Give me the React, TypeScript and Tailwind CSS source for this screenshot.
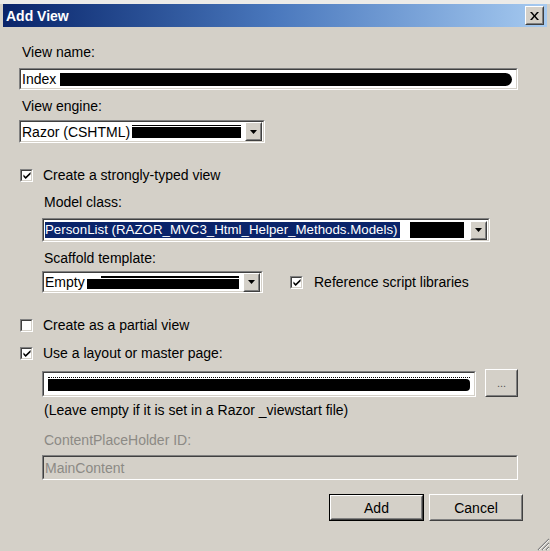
import type { ReactNode } from "react"

// Classic Windows "Add View" dialog.

function Sunken({ className = "", children }: { className?: string; children?: ReactNode }) {
  return (
    <div className={`border border-t-[#808080] border-l-[#808080] border-b-white border-r-white ${className}`}>
      <div className="flex h-full items-center border border-t-[#404040] border-l-[#404040] border-b-[#d4d0c8] border-r-[#d4d0c8]">
        {children}
      </div>
    </div>
  )
}

function Raised({ className = "", children }: { className?: string; children?: ReactNode }) {
  return (
    <div className={`border border-t-white border-l-white border-b-[#404040] border-r-[#404040] ${className}`}>
      <div className="flex h-full items-center justify-center border border-t-[#d4d0c8] border-l-[#d4d0c8] border-b-[#808080] border-r-[#808080] bg-[#d4d0c8]">
        {children}
      </div>
    </div>
  )
}

function DropArrow() {
  return (
    <Raised className="mr-px h-[19px] w-[17px] shrink-0">
      <svg width="7" height="4" viewBox="0 0 7 4">
        <path d="M0 0h7L3.5 4z" fill="#000" />
      </svg>
    </Raised>
  )
}

function Check({ checked }: { checked: boolean }) {
  return (
    <Sunken className="h-[13px] w-[13px] shrink-0 bg-white">
      {checked && (
        <svg width="9" height="9" viewBox="0 0 9 9" className="ml-px">
          <path d="M0.5 3.5l2.5 2.5 5.5-5.5v2.5L3 8.5 0.5 6z" fill="#000" />
        </svg>
      )}
    </Sunken>
  )
}

function Redact({ className = "" }: { className?: string }) {
  return <div className={`h-[13px] rounded-r-full bg-black ${className}`} />
}

export default function App() {
  return (
    <div
      className="relative flex h-[551px] w-[550px] flex-col overflow-hidden bg-[#d4d0c8] text-[14px] leading-4 text-black"
      style={{ fontFamily: '"Liberation Sans", Arial, sans-serif' }}
    >
      <div className="h-[4px] bg-[#ecebe8]" />
      <div className="mx-[3px] flex h-[23px] items-center justify-between bg-gradient-to-r from-[#0a246a] via-[#4a78bd] to-[#a6caf0] pl-[3px] pr-[3px]">
        <span className="text-[14px] font-bold text-white">Add View</span>
        <Raised className="h-[19px] w-[19px]">
          <svg width="9" height="8" viewBox="0 0 9 8">
            <path d="M0 0h2l2.5 3L7 0h2L5.5 4 9 8H7L4.5 5 2 8H0l3.5-4z" fill="#000" />
          </svg>
        </Raised>
      </div>

      <div className="flex flex-col px-[19px]">
        <div className="mt-[17px] pl-[3px]">View name:</div>
        <Sunken className="mt-[8px] h-[22px] w-[499px] bg-white">
          <span className="pl-[1px]">Index</span>
          <Redact className="ml-[4px] mr-[4px] flex-1" />
        </Sunken>

        <div className="mt-[8px] pl-[3px]">View engine:</div>
        <Sunken className="mt-[6px] h-[23px] w-[246px] bg-white">
          <span className="pl-[1px]">Razor (CSHTML)</span>
          <div className="ml-[2px] mr-[4px] flex flex-1 flex-col gap-px">
            <div className="h-px bg-black" />
            <div className="h-[11px] bg-black" />
          </div>
          <DropArrow />
        </Sunken>

        <div className="mt-[24px] flex items-center gap-[10px] pl-[1px]">
          <Check checked />
          <span>Create a strongly-typed view</span>
        </div>

        <div className="flex flex-col pl-[23px]">
          <div className="mt-[11px] pl-[2px]">Model class:</div>
          <Sunken className="mt-[8px] h-[24px] w-[448px] bg-white">
            <span className="ml-px bg-[#0a246a] pr-[2px] text-[13.3px] text-white">PersonList (RAZOR_MVC3_Html_Helper_Methods.Models)</span>
            <div className="ml-[8px] w-[2px]" />
            <div className="mr-[6px] h-[16px] flex-1 bg-black" />
            <DropArrow />
          </Sunken>

          <div className="mt-[8px] pl-[2px]">Scaffold template:</div>
          <div className="mt-[5px] flex items-center">
            <Sunken className="h-[22px] w-[221px] bg-white">
              <span className="pl-[1px]">Empty</span>
              <div className="ml-[2px] mr-[4px] flex flex-1 flex-col gap-px">
                <div className="ml-[14px] h-[2px] bg-black" />
                <div className="h-[10px] bg-black" />
              </div>
              <DropArrow />
            </Sunken>
            <div className="ml-[27px] flex items-center gap-[11px]">
              <Check checked />
              <span>Reference script libraries</span>
            </div>
          </div>
        </div>

        <div className="mt-[24px] flex items-center gap-[10px] pl-[1px]">
          <Check checked={false} />
          <span>Create as a partial view</span>
        </div>

        <div className="mt-[12px] flex items-center gap-[10px] pl-[1px]">
          <Check checked />
          <span>Use a layout or master page:</span>
        </div>

        <div className="flex flex-col pl-[23px]">
          <div className="mt-[8px] flex items-start gap-[9px]">
            <Sunken className="mt-[2px] h-[26px] w-[434px] bg-white">
              <div className="mx-[4px] flex flex-1 flex-col gap-px">
                <div className="h-px border-t border-dotted border-black" />
                <div className="h-[12px] rounded-r-sm bg-black" />
              </div>
            </Sunken>
            <Raised className="h-[28px] w-[33px]">
              <span className="text-[11px] leading-none text-[#555]">...</span>
            </Raised>
          </div>

          <div className="mt-[5px] pl-[2px]">(Leave empty if it is set in a Razor _viewstart file)</div>

          <div className="mt-[14px] pl-[2px] text-[#8c8a85]">ContentPlaceHolder ID:</div>
          <Sunken className="mt-[7px] h-[25px] w-[476px]">
            <span className="pl-[1px] text-[#8c8a85]">MainContent</span>
          </Sunken>
        </div>

        <div className="mt-[14px] flex justify-end gap-[5px] pr-[8px]">
          <div className="border border-black">
            <Raised className="h-[25px] w-[93px]">Add</Raised>
          </div>
          <Raised className="h-[27px] w-[94px]">Cancel</Raised>
        </div>
      </div>

      <svg className="absolute bottom-0 right-0" width="14" height="14" viewBox="0 0 14 14">
        <path d="M13 2L2 13M13 6L6 13M13 10L10 13" stroke="#808080" strokeWidth="1.2" />
        <path d="M13 3L3 13M13 7L7 13M13 11L11 13" stroke="#fff" strokeWidth="0.8" />
      </svg>
    </div>
  )
}
